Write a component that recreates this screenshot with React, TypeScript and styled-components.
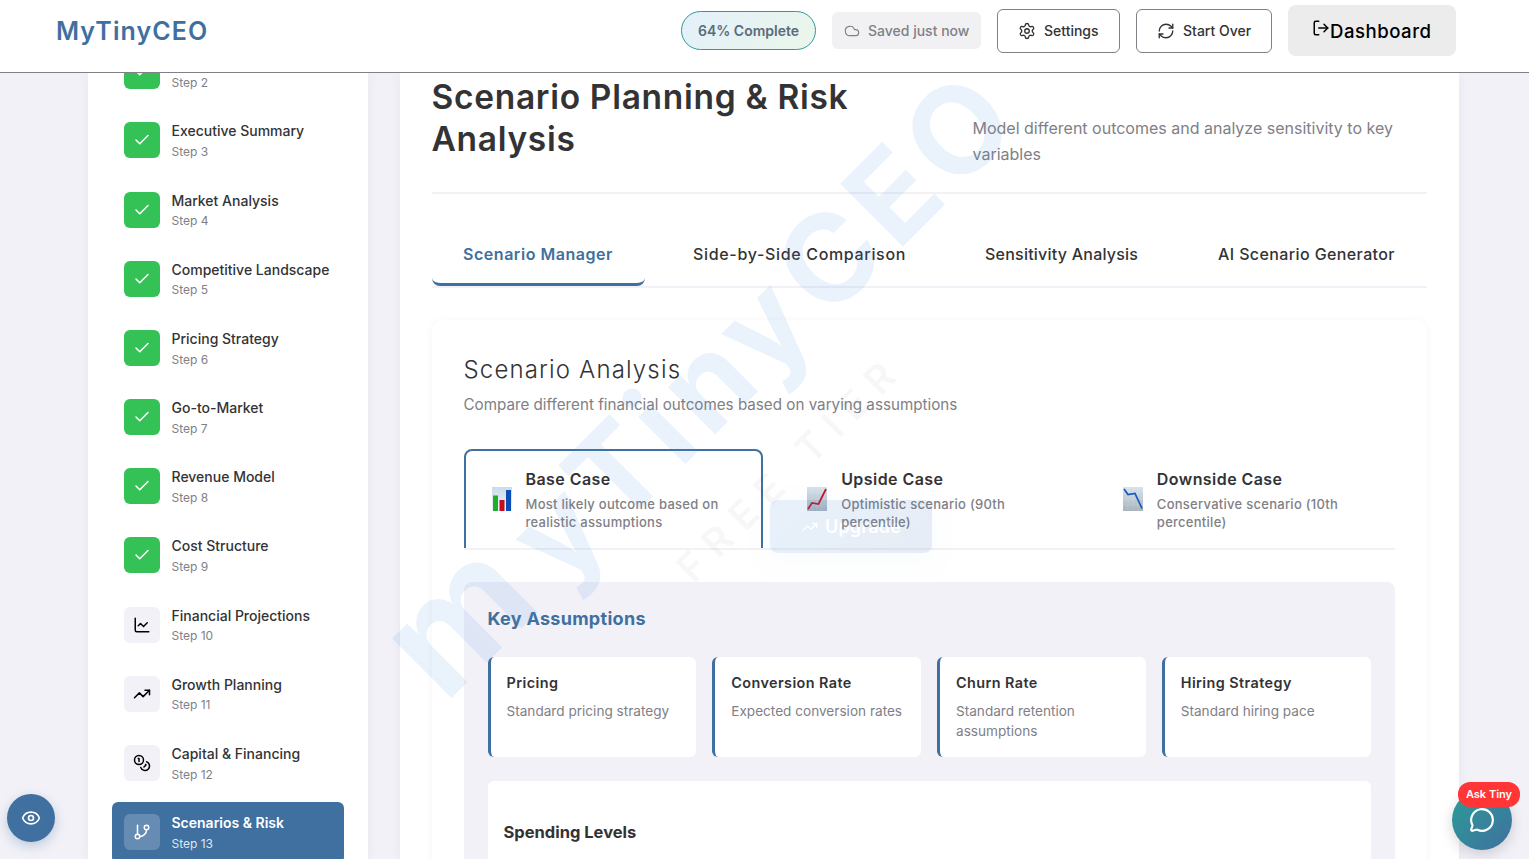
import React from 'react';
import styled, { createGlobalStyle } from 'styled-components';
import {
  ChartLine, Check, Cloud, Coins, Eye, GitBranch, LogOut, MessageCircle, RefreshCw, Settings, TrendingUp,
} from 'lucide-react';

const blue = '#4070a0';
const ink = '#333335';
const grey = '#808086';
const wash = '#f2f1f7';

const GlobalStyle = createGlobalStyle`
  * { box-sizing: border-box; }
  body { margin: 0; background: ${wash}; font-family: Inter, 'Liberation Sans', sans-serif; color: ${ink}; }
  h1, h2, h3, h4, p { margin: 0; }
  button { font: inherit; }
`;

const Page = styled.div`
  position: relative;
  height: 859px;
  display: flex;
  flex-direction: column;
  overflow: hidden;
`;

const Header = styled.header`
  position: relative;
  z-index: 1;
  flex: 0 0 73px;
  display: flex;
  justify-content: space-between;
  align-items: center;
  padding: 0 73px 11px 56px;
  background: #fff;
  border-bottom: 1px solid ${grey};
`;

const Logo = styled.div`
  font-size: 25px;
  font-weight: 600;
  letter-spacing: 1.08px;
  color: ${blue};
`;

const Actions = styled.div`
  display: flex;
  align-items: center;
  gap: 16px;
`;

const Progress = styled.div`
  width: 135px;
  height: 39px;
  display: flex;
  align-items: center;
  justify-content: center;
  border: 1px solid #2f9a98;
  border-radius: 20px;
  background: linear-gradient(135deg, #e3f0fa, #ebf6ea);
  color: #5b6b7b;
  font-size: 14px;
  font-weight: 600;
`;

const Saved = styled.div`
  width: 149px;
  height: 37px;
  display: flex;
  align-items: center;
  gap: 8px;
  padding-left: 12px;
  border-radius: 6px;
  background: #f1f1f3;
  color: ${grey};
  font-size: 14px;
  font-weight: 500;
`;

const HeaderButton = styled.button<{ $width: number }>`
  width: ${p => p.$width}px;
  height: 44px;
  display: flex;
  align-items: center;
  gap: 8px;
  padding: 0 0 0 20px;
  border: 1px solid ${grey};
  border-radius: 6px;
  background: #fff;
  color: ${ink};
  font-size: 14px;
  font-weight: 500;
`;

const DashboardButton = styled.button`
  width: 168px;
  height: 51px;
  display: flex;
  align-items: center;
  padding: 0 0 0 24px;
  border: 0;
  border-radius: 8px;
  background: #ececec;
  color: #000;
  font-size: 18.6px;
  font-weight: 500;
  letter-spacing: 0.5px;
  svg { margin-bottom: 5px; }
`;

const Body = styled.div`
  flex: 1;
  min-height: 0;
  display: flex;
  gap: 32px;
  padding: 0 70.5px 0 87.5px;
`;

const Sidebar = styled.aside`
  flex: 0 0 280px;
  padding: 0 24px;
  background: #fff;
  box-shadow: 0 2px 12px rgba(0, 0, 0, 0.05);
`;

const StepList = styled.div`
  display: flex;
  flex-direction: column;
  gap: 8px;
  margin-top: -31.84px;
`;

const StepItem = styled.div<{ $active: boolean }>`
  height: 61.19px;
  display: flex;
  gap: 12px;
  padding: 12px;
  border-radius: 6px;
  background: ${p => (p.$active ? blue : 'transparent')};
  color: ${p => (p.$active ? '#fff' : ink)};
`;

const StepIcon = styled.div<{ $state: 'done' | 'todo' | 'active' }>`
  flex: 0 0 36px;
  height: 36px;
  display: flex;
  align-items: center;
  justify-content: center;
  border-radius: 6px;
  background: ${p => ({ done: '#34c256', todo: wash, active: 'rgba(255, 255, 255, 0.2)' })[p.$state]};
  color: ${p => (p.$state === 'todo' ? '#000' : '#fff')};
`;

const StepTitle = styled.div<{ $active: boolean }>`
  margin-bottom: 4.9px;
  font-size: 14px;
  line-height: 17.7px;
  font-weight: ${p => (p.$active ? 600 : 500)};
`;

const StepNumber = styled.div<{ $active: boolean }>`
  font-size: 12px;
  line-height: 14.4px;
  color: ${p => (p.$active ? 'rgba(255, 255, 255, 0.85)' : grey)};
`;

const Main = styled.main`
  flex: 1;
  min-width: 0;
  padding: 3px 32px 0;
  background: #fff;
  box-shadow: 0 2px 12px rgba(0, 0, 0, 0.05);
`;

const TitleBar = styled.div`
  height: 118px;
  display: flex;
  justify-content: space-between;
  border-bottom: 2px solid #f2f2f5;
`;

const PageTitle = styled.h1`
  width: 440px;
  font-size: 33.5px;
  font-weight: 600;
  line-height: 42px;
  letter-spacing: 0.7px;
`;

const PageIntro = styled.p`
  width: 454px;
  padding-top: 39px;
  color: ${grey};
  font-size: 16px;
  line-height: 26px;
`;

const Tabs = styled.div`
  height: 65px;
  display: grid;
  grid-template-columns: 213px 276px 217px 241px;
  gap: 16px;
  margin-top: 29px;
  border-bottom: 2px solid ${wash};
`;

const Tab = styled.div<{ $active?: boolean; $track: number }>`
  height: 63px;
  padding: 18px 0 0 ${p => (p.$active ? 31.5 : 32.5)}px;
  border-bottom: 3px solid ${p => (p.$active ? blue : 'transparent')};
  border-radius: 8px;
  color: ${p => (p.$active ? blue : ink)};
  font-size: 16px;
  font-weight: ${p => (p.$active ? 600 : 500)};
  line-height: 26px;
  letter-spacing: ${p => p.$track}px;
  white-space: nowrap;
`;

const Card = styled.section`
  height: 600px;
  margin-top: 32px;
  padding: 32px;
  border-radius: 12px;
  background: #fff;
  box-shadow: 0 1px 8px rgba(0, 0, 0, 0.045);
`;

const CardTitle = styled.h2`
  font-size: 24px;
  font-weight: 300;
  line-height: 35px;
  letter-spacing: 1.15px;
`;

const CardIntro = styled.p`
  margin-top: 6px;
  color: ${grey};
  font-size: 15.2px;
  line-height: 24px;
`;

const Cases = styled.div`
  height: 101px;
  display: grid;
  grid-template-columns: repeat(3, 1fr);
  gap: 16px;
  margin-top: 32px;
  border-bottom: 2px solid ${wash};
  overflow: hidden;
`;

const Case = styled.div<{ $active?: boolean }>`
  height: 120px;
  display: flex;
  gap: 14px;
  padding: 16px 20px 0 26px;
  border: 2px solid ${p => (p.$active ? blue : 'transparent')};
  border-radius: 8px;
  svg { flex: none; margin-top: 20px; }
`;

const CaseName = styled.h3`
  font-size: 16px;
  font-weight: 600;
  line-height: 25px;
  letter-spacing: 0.44px;
`;

const CaseText = styled.p`
  margin-top: 3px;
  color: ${grey};
  font-size: 13px;
  font-weight: 500;
  line-height: 18px;
  letter-spacing: 0.27px;
  white-space: pre;
`;

const Assumptions = styled.div`
  height: 340px;
  margin-top: 32px;
  padding: 24px;
  border-radius: 8px;
  background: ${wash};
`;

const AssumptionsTitle = styled.h3`
  color: ${blue};
  font-size: 18px;
  font-weight: 700;
  line-height: 26px;
  letter-spacing: 0.29px;
`;

const AssumptionGrid = styled.div`
  display: grid;
  grid-template-columns: repeat(4, 1fr);
  gap: 16px;
  margin-top: 25px;
`;

const Assumption = styled.div`
  height: 100px;
  padding: 15px 16px 0;
  border-left: 3px solid ${blue};
  border-radius: 6px;
  background: #fff;
`;

const AssumptionName = styled.h4`
  font-size: 14.4px;
  font-weight: 600;
  line-height: 21px;
  letter-spacing: 0.42px;
`;

const AssumptionText = styled.p`
  margin-top: 8px;
  color: ${grey};
  font-size: 13.6px;
  line-height: 20px;
`;

const Spending = styled.div`
  height: 120px;
  margin-top: 24px;
  padding: 38px 16px;
  border-radius: 6px;
  background: #fff;
  font-size: 16.5px;
  font-weight: 700;
  line-height: 26px;
`;

const Watermark = styled.svg`
  position: absolute;
  inset: 0;
  pointer-events: none;
  font-family: Inter, sans-serif;
`;

const Upgrade = styled.div`
  position: absolute;
  left: 770px;
  top: 500px;
  width: 162px;
  height: 53px;
  display: flex;
  align-items: center;
  gap: 7px;
  padding-left: 32px;
  border-radius: 8px;
  background: linear-gradient(135deg, #4a90e2, #3b6fb0);
  box-shadow: 0 6px 20px rgba(74, 144, 226, 0.25);
  color: #fff;
  font-size: 18px;
  font-weight: 600;
  letter-spacing: 0.15px;
  opacity: 0.12;
`;

const ViewButton = styled.div`
  position: absolute;
  left: 7px;
  top: 794px;
  width: 48px;
  height: 48px;
  display: grid;
  place-items: center;
  border-radius: 50%;
  background: ${blue};
  color: #fff;
  box-shadow: 0 4px 12px rgba(64, 112, 160, 0.3);
`;

const ChatButton = styled.div`
  position: absolute;
  left: 1452px;
  top: 790px;
  width: 60px;
  height: 60px;
  display: grid;
  place-items: center;
  border-radius: 50%;
  background: linear-gradient(135deg, #2a9d96, ${blue});
  color: #fff;
  box-shadow: 0 4px 14px rgba(0, 0, 0, 0.16);
`;

const ChatBadge = styled.div`
  position: absolute;
  left: 6px;
  top: -8px;
  width: 62px;
  height: 25px;
  border-radius: 12px;
  background: #ff3635;
  font-size: 11px;
  font-weight: 600;
  line-height: 25px;
  text-align: center;
  white-space: nowrap;
`;

const steps = [
  'Company Overview', 'Executive Summary', 'Market Analysis', 'Competitive Landscape', 'Pricing Strategy', 'Go-to-Market',
  'Revenue Model', 'Cost Structure', 'Financial Projections', 'Growth Planning', 'Capital & Financing', 'Scenarios & Risk',
];

const laterIcons = [ChartLine, TrendingUp, Coins, GitBranch];

const assumptions = [
  ['Pricing', 'Standard pricing strategy'],
  ['Conversion Rate', 'Expected conversion rates'],
  ['Churn Rate', 'Standard retention assumptions'],
  ['Hiring Strategy', 'Standard hiring pace'],
];

function ChartPicture({ kind }: { kind: 'bars' | 'up' | 'down' }) {
  return (
    <svg width="20" height="24" viewBox="0 0 20 24">
      <defs>
        <linearGradient id={`paper-${kind}`} x1="0" y1="0" x2="0" y2="1">
          <stop offset="0" stopColor={kind === 'bars' ? '#c9dbea' : '#d6e4ee'} />
          <stop offset="1" stopColor={kind === 'bars' ? '#eef3f6' : '#a9b3bb'} />
        </linearGradient>
      </defs>
      <rect width="20" height="24" fill={`url(#paper-${kind})`} />
      <path d="M0 6H20M0 12H20M0 18H20M5 0V24M10 0V24M15 0V24" stroke="#fff" strokeOpacity=".2" strokeWidth=".6" />
      {kind === 'bars' && (
        <>
          <rect x="1" y="8.5" width="5" height="15.5" fill="#1fae2b" />
          <rect x="7.5" y="13" width="5" height="11" fill="#c40d1e" />
          <rect x="14" y="3" width="5" height="21" fill="#0a4db8" />
        </>
      )}
      {kind === 'up' && <path d="M1 22L5 16L11.5 17L19 2" fill="none" stroke="#c41424" strokeWidth="1.7" />}
      {kind === 'down' && <path d="M1 2L5 7.5L12 6.5L19 21.5" fill="none" stroke="#1557c0" strokeWidth="1.7" />}
    </svg>
  );
}

export default function App() {
  return (
    <Page>
      <GlobalStyle />
      <Header>
        <Logo>MyTinyCEO</Logo>
        <Actions>
          <Progress>64% Complete</Progress>
          <Saved><Cloud size={16} strokeWidth={1.7} />Saved just now</Saved>
          <HeaderButton $width={123}><Settings size={18} strokeWidth={1.8} />Settings</HeaderButton>
          <HeaderButton $width={136}><RefreshCw size={18} strokeWidth={1.8} />Start Over</HeaderButton>
          <DashboardButton><LogOut size={18} />Dashboard</DashboardButton>
        </Actions>
      </Header>
      <Body>
        <Sidebar>
          <StepList>
            {steps.map((title, i) => {
              const active = i === 11;
              const Icon = i < 8 ? Check : laterIcons[i - 8];
              return (
                <StepItem key={title} $active={active}>
                  <StepIcon $state={i < 8 ? 'done' : active ? 'active' : 'todo'}><Icon size={18} strokeWidth={2} /></StepIcon>
                  <div>
                    <StepTitle $active={active}>{i > 0 ? title : '\u00a0'}</StepTitle>
                    <StepNumber $active={active}>Step {i + 2}</StepNumber>
                  </div>
                </StepItem>
              );
            })}
          </StepList>
        </Sidebar>
        <Main>
          <TitleBar>
            <PageTitle>Scenario Planning &amp; Risk Analysis</PageTitle>
            <PageIntro>Model different outcomes and analyze sensitivity to key variables</PageIntro>
          </TitleBar>
          <Tabs>
            <Tab $active $track={0.54}>Scenario Manager</Tab>
            <Tab $track={0.67}>Side-by-Side Comparison</Tab>
            <Tab $track={0.23}>Sensitivity Analysis</Tab>
            <Tab $track={0.39}>AI Scenario Generator</Tab>
          </Tabs>
          <Card>
            <CardTitle>Scenario Analysis</CardTitle>
            <CardIntro>Compare different financial outcomes based on varying assumptions</CardIntro>
            <Cases>
              <Case $active>
                <ChartPicture kind="bars" />
                <div><CaseName>Base Case</CaseName><CaseText>{'Most likely outcome based on\nrealistic assumptions'}</CaseText></div>
              </Case>
              <Case>
                <ChartPicture kind="up" />
                <div><CaseName>Upside Case</CaseName><CaseText>{'Optimistic scenario (90th\npercentile)'}</CaseText></div>
              </Case>
              <Case>
                <ChartPicture kind="down" />
                <div><CaseName>Downside Case</CaseName><CaseText>{'Conservative scenario (10th\npercentile)'}</CaseText></div>
              </Case>
            </Cases>
            <Assumptions>
              <AssumptionsTitle>Key Assumptions</AssumptionsTitle>
              <AssumptionGrid>
                {assumptions.map(([name, text]) => (
                  <Assumption key={name}>
                    <AssumptionName>{name}</AssumptionName>
                    <AssumptionText>{text}</AssumptionText>
                  </Assumption>
                ))}
              </AssumptionGrid>
              <Spending>Spending Levels</Spending>
            </Assumptions>
          </Card>
        </Main>
      </Body>
      <Watermark width="1529" height="859" viewBox="0 0 1529 859">
        <g transform="rotate(-45)">
          <text y="812.8" fontSize="122" fontWeight="700" fill="#4a90e2" fillOpacity="0.115" stroke="#4a90e2" strokeOpacity="0">
            <tspan x="-184" fontSize="154">m</tspan>
            <tspan x="-19 61 149 191 272 358 456 538">yTinyCEO</tspan>
          </text>
          <text x="77" y="903.6" fontSize="39" fontWeight="600" fill="#000" fillOpacity="0.05" letterSpacing="12.4">FREE TIER</text>
        </g>
      </Watermark>
      <Upgrade><TrendingUp size={16} />Upgrade</Upgrade>
      <ViewButton><Eye size={20} /></ViewButton>
      <ChatButton><MessageCircle size={26} /><ChatBadge>Ask Tiny</ChatBadge></ChatButton>
    </Page>
  );
}
